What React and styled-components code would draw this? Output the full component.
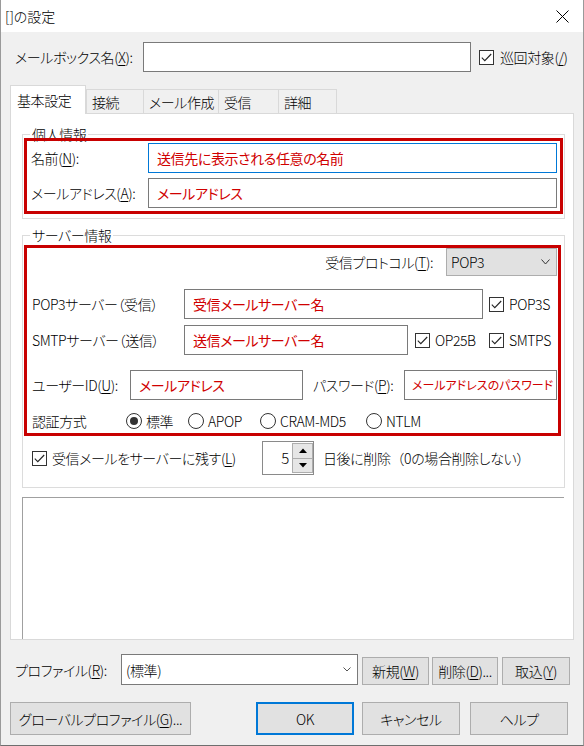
import React from 'react';
import styled, { createGlobalStyle } from 'styled-components';

const GlobalStyle = createGlobalStyle`
  html, body { margin: 0; padding: 0; background: #f0f0f0; }
  body {
    font-family: "Noto Sans CJK JP", "Noto Sans", sans-serif;
    font-size: 14px;
    font-weight: 300;
    letter-spacing: -0.4px;
    color: #000;
    font-feature-settings: "palt" 1;
  }
  *, *::before, *::after { box-sizing: border-box; }
  u { text-decoration-thickness: 1px; text-underline-offset: 2px; }
`;

const Window = styled.div`
  width: 584px;
  height: 746px;
  background: #f0f0f0;
  border-left: 1px solid #9a9a9a;
  border-right: 1px solid #9a9a9a;
  border-bottom: 1px solid #6e6e6e;
  display: flex;
  flex-direction: column;
  overflow: hidden;
`;

const TitleBar = styled.div`
  height: 32px;
  flex: none;
  background: #fff;
  display: flex;
  align-items: center;
  justify-content: space-between;
  padding-left: 4px;
`;

const Title = styled.span`
  font-size: 14px;
  line-height: 20px;
  letter-spacing: 0;
`;

const CloseButton = styled.div`
  width: 42px;
  height: 32px;
  display: flex;
  align-items: center;
  justify-content: center;
`;

const Body = styled.div`
  flex: 1;
  display: flex;
  flex-direction: column;
  padding: 0 9px;
`;

const Row = styled.div`
  display: flex;
  align-items: ${p => p.$align || 'center'};
  justify-content: ${p => p.$justify || 'flex-start'};
  height: ${p => p.$h || 30}px;
  margin-top: ${p => p.$mt || 0}px;
  padding-left: ${p => p.$pl || 0}px;
  padding-right: ${p => p.$pr || 0}px;
  flex: none;
  line-height: 20px;
`;

const Label = styled.span`
  flex: none;
  width: ${p => (p.$w ? `${p.$w}px` : 'auto')};
  margin-left: ${p => p.$ml || 0}px;
  white-space: nowrap;
  align-self: center;
`;

const Paren = styled.span`
  font-feature-settings: normal;
`;

const Field = styled.div`
  flex: none;
  width: ${p => p.$w}px;
  height: ${p => p.$h || 30}px;
  margin-left: ${p => p.$ml || 0}px;
  border: 1px solid ${p => (p.$focus ? '#0078d7' : '#7a7a7a')};
  background: #fff;
  color: #d00000;
  font-weight: 400;
  font-size: ${p => p.$fs || 14}px;
  letter-spacing: ${p => (p.$fs ? 0 : -0.4)}px;
  padding-left: ${p => p.$pl || 8}px;
  display: flex;
  align-items: center;
  white-space: nowrap;
  overflow: hidden;
`;

const CheckItem = styled.label`
  flex: none;
  display: flex;
  align-items: center;
  gap: ${p => p.$gap || 5}px;
  width: ${p => (p.$w ? `${p.$w}px` : 'auto')};
  margin-left: ${p => p.$ml || 0}px;
  white-space: nowrap;
`;

const Box = styled.span`
  width: 15px;
  height: 15px;
  flex: none;
  border: 1px solid #333;
  background: #fff;
  display: inline-flex;
  align-items: center;
  justify-content: center;
`;

const RadioCircle = styled.span`
  width: 16px;
  height: 16px;
  flex: none;
  border: 1px solid #333;
  border-radius: 50%;
  background: #fff;
  display: inline-flex;
  align-items: center;
  justify-content: center;
  &::after {
    content: '';
    width: 8px;
    height: 8px;
    border-radius: 50%;
    background: ${p => (p.$on ? '#333' : 'transparent')};
  }
`;

const TabBar = styled.div`
  display: flex;
  align-items: flex-end;
  height: 28px;
  margin-top: 13px;
  flex: none;
`;

const Tab = styled.div`
  position: relative;
  z-index: ${p => (p.$active ? 1 : 0)};
  width: ${p => p.$w}px;
  height: ${p => (p.$active ? 29 : 24)}px;
  margin-bottom: ${p => (p.$active ? -1 : 0)}px;
  margin-left: ${p => p.$ml || 0}px;
  background: ${p => (p.$active ? '#fff' : '#f0f0f0')};
  border: 1px solid #d9d9d9;
  border-bottom: none;
  padding-left: ${p => (p.$active ? 6 : 5)}px;
  padding-bottom: ${p => (p.$active ? 1 : 0)}px;
  display: flex;
  align-items: center;
  line-height: 20px;
  white-space: nowrap;
`;

const Panel = styled.div`
  height: 527px;
  flex: none;
  background: #fff;
  border: 1px solid #d9d9d9;
  padding: 0 8px 0 11px;
  display: flex;
  flex-direction: column;
  overflow: hidden;
`;

const Group = styled.div`
  position: relative;
  flex: none;
  margin-top: ${p => p.$mt}px;
  border: 1px solid #dcdcdc;
  padding: ${p => p.$pad};
`;

const Legend = styled.span`
  position: absolute;
  top: -11px;
  left: 7px;
  padding: 0 2px;
  background: #fff;
  line-height: 20px;
  white-space: nowrap;
`;

const RedBox = styled.div`
  position: relative;
  z-index: 1;
  border: 3px solid #c80000;
  padding: ${p => p.$pad};
  display: flex;
  flex-direction: column;
`;

const Select = styled.div`
  flex: none;
  width: ${p => p.$w}px;
  height: ${p => p.$h}px;
  margin-left: ${p => p.$ml || 0}px;
  background: ${p => (p.$white ? '#fff' : '#e1e1e1')};
  border: 1px solid ${p => (p.$white ? '#7a7a7a' : '#adadad')};
  display: flex;
  align-items: center;
  justify-content: space-between;
  padding: 0 6px 0 4px;
  white-space: nowrap;
`;

const Spinner = styled.div`
  flex: none;
  width: 52px;
  height: 34px;
  margin-left: ${p => p.$ml || 0}px;
  border: 1px solid #8a8a8a;
  background: #fff;
  display: flex;
`;

const SpinValue = styled.div`
  flex: 1;
  display: flex;
  align-items: center;
  justify-content: flex-end;
  padding-right: 3px;
  font-size: 15px;
`;

const SpinArrows = styled.div`
  width: 21px;
  flex: none;
  display: flex;
  flex-direction: column;
  padding: 1px 0;
`;

const SpinButton = styled.div`
  flex: 1;
  background: #e6e6e6;
  border: 1px solid #adadad;
  margin-top: ${p => (p.$down ? -1 : 0)}px;
  display: flex;
  align-items: center;
  justify-content: center;
`;

const EmptyBox = styled.div`
  flex: 1;
  margin-top: 9px;
  border-top: 1px solid #a0a0a0;
  border-left: 1px solid #a0a0a0;
  margin-right: 1px;
  background: #fff;
`;

const Button = styled.div`
  flex: none;
  width: ${p => p.$w}px;
  height: ${p => p.$h}px;
  margin-left: ${p => p.$ml || 0}px;
  background: #e1e1e1;
  border: ${p => (p.$default ? '2px solid #0078d7' : '1px solid #adadad')};
  display: flex;
  align-items: center;
  justify-content: center;
  white-space: nowrap;
  line-height: 20px;
`;

const Spacer = styled.div`
  flex: 1;
`;

const Check = () => (
  <Box>
    <svg width="11" height="9" viewBox="0 0 11 9">
      <polyline points="0.8,4.6 3.8,7.6 10.2,1" fill="none" stroke="#222" strokeWidth="1.1" />
    </svg>
  </Box>
);

const Chevron = ({ w = 9, color = '#333' }) => (
  <svg width={w} height={Math.round(w / 2) + 1} viewBox={`0 0 ${w} ${Math.round(w / 2) + 1}`}>
    <polyline points={`0.5,0.5 ${w / 2},${Math.round(w / 2)} ${w - 0.5},0.5`} fill="none" stroke={color} strokeWidth="1" />
  </svg>
);

const Tri = ({ down }) => (
  <svg width="8" height="5" viewBox="0 0 8 5">
    <polygon points={down ? '0,0 8,0 4,4.5' : '4,0.5 8,5 0,5'} fill="#000" />
  </svg>
);

const Radio = ({ on, children, w }) => (
  <CheckItem $w={w} $gap={4}>
    <RadioCircle $on={on} />
    <span>{children}</span>
  </CheckItem>
);

export default function App() {
  return (
    <>
      <GlobalStyle />
      <Window>
        <TitleBar>
          <Title>[]の設定</Title>
          <CloseButton>
            <svg width="13" height="13" viewBox="0 0 13 13">
              <path d="M0.5 0.5 L12.5 12.5 M12.5 0.5 L0.5 12.5" stroke="#000" strokeWidth="1" />
            </svg>
          </CloseButton>
        </TitleBar>

        <Body>
          <Row $mt={10} $pl={5}>
            <Label $w={128}>メールボックス名(<u>X</u>):</Label>
            <Field $w={328} />
            <CheckItem $ml={8} $gap={6}>
              <Check />
              <span>巡回対象(<u>/</u>)</span>
            </CheckItem>
          </Row>

          <TabBar>
            <Tab $active $w={76}>基本設定</Tab>
            <Tab $w={58}>接続</Tab>
            <Tab $w={76} $ml={-1}>メール作成</Tab>
            <Tab $w={61} $ml={-1}>受信</Tab>
            <Tab $w={59} $ml={-1}>詳細</Tab>
          </TabBar>

          <Panel>
            <Group $mt={20} $pad="3px 1px 4px 1px">
              <Legend>個人情報</Legend>
              <RedBox $pad="2px 2px 3px 4px">
                <Row>
                  <Label $w={117}>名前(<u>N</u>):</Label>
                  <Field $w={409} $focus>送信先に表示される任意の名前</Field>
                </Row>
                <Row $mt={5}>
                  <Label $w={117}>メールアドレス(<u>A</u>):</Label>
                  <Field $w={409}>メールアドレス</Field>
                </Row>
              </RedBox>
            </Group>

            <Group $mt={16} $pad="9px 3px 12px 1px">
              <Legend>サーバー情報</Legend>
              <RedBox $pad="0 1px 2px 5px">
                <Row $h={28} $justify="flex-end">
                  <Label>受信プロトコル(<u>T</u>):</Label>
                  <Select $w={111} $h={28} $ml={13}>
                    <span>POP3</span>
                    <Chevron w={9} />
                  </Select>
                </Row>
                <Row $mt={13}>
                  <Label $w={152}>POP3サーバー（受信）</Label>
                  <Field $w={299}>受信メールサーバー名</Field>
                  <CheckItem $ml={6}>
                    <Check />
                    <span>POP3S</span>
                  </CheckItem>
                </Row>
                <Row $mt={6}>
                  <Label $w={152}>SMTPサーバー（送信）</Label>
                  <Field $w={224}>送信メールサーバー名</Field>
                  <CheckItem $ml={7} $w={74}>
                    <Check />
                    <span>OP25B</span>
                  </CheckItem>
                  <CheckItem>
                    <Check />
                    <span>SMTPS</span>
                  </CheckItem>
                </Row>
                <Row $mt={15}>
                  <Label $w={98}>ユーザーID(<u>U</u>):</Label>
                  <Field $w={173}>メールアドレス</Field>
                  <Label $w={91} $ml={10}>パスワード(<u>P</u>):</Label>
                  <Field $w={153} $fs={12} $pl={7}>メールアドレスのパスワード</Field>
                </Row>
                <Row $mt={11} $h={20}>
                  <Label $w={94}>認証方式</Label>
                  <Radio on w={62}>標準</Radio>
                  <Radio w={72}>APOP</Radio>
                  <Radio w={106}>CRAM-MD5</Radio>
                  <Radio>NTLM</Radio>
                </Row>
              </RedBox>
              <Row $mt={5} $h={34} $pl={8}>
                <CheckItem $w={230} $gap={5}>
                  <Check />
                  <span>受信メールをサーバーに残す(<u>L</u>)</span>
                </CheckItem>
                <Spinner>
                  <SpinValue>5</SpinValue>
                  <SpinArrows>
                    <SpinButton><Tri /></SpinButton>
                    <SpinButton $down><Tri down /></SpinButton>
                  </SpinArrows>
                </Spinner>
                <Label $ml={9}>日後に削除<Paren>（</Paren>0の場合削除しない<Paren>）</Paren></Label>
              </Row>
            </Group>

            <EmptyBox />
          </Panel>

          <Row $mt={14} $h={31} $pl={5} $align="flex-end">
            <Label $w={106}>プロファイル(<u>R</u>):</Label>
            <Select $w={237} $h={31} $white>
              <span>(標準)</span>
              <Chevron w={8} color="#555" />
            </Select>
            <Button $w={67} $h={28} $ml={4}>新規(<u>W</u>)</Button>
            <Button $w={66} $h={28} $ml={3}>削除(<u>D</u>)...</Button>
            <Button $w={68} $h={28} $ml={4}>取込(<u>Y</u>)</Button>
          </Row>

          <Row $mt={17} $h={33} $pr={6}>
            <Button $w={181} $h={33}>グローバルプロファイル(<u>G</u>)...</Button>
            <Spacer />
            <Button $w={98} $h={33} $default>OK</Button>
            <Button $w={98} $h={33} $ml={8}>キャンセル</Button>
            <Button $w={98} $h={33} $ml={10}>ヘルプ</Button>
          </Row>
        </Body>
      </Window>
    </>
  );
}
